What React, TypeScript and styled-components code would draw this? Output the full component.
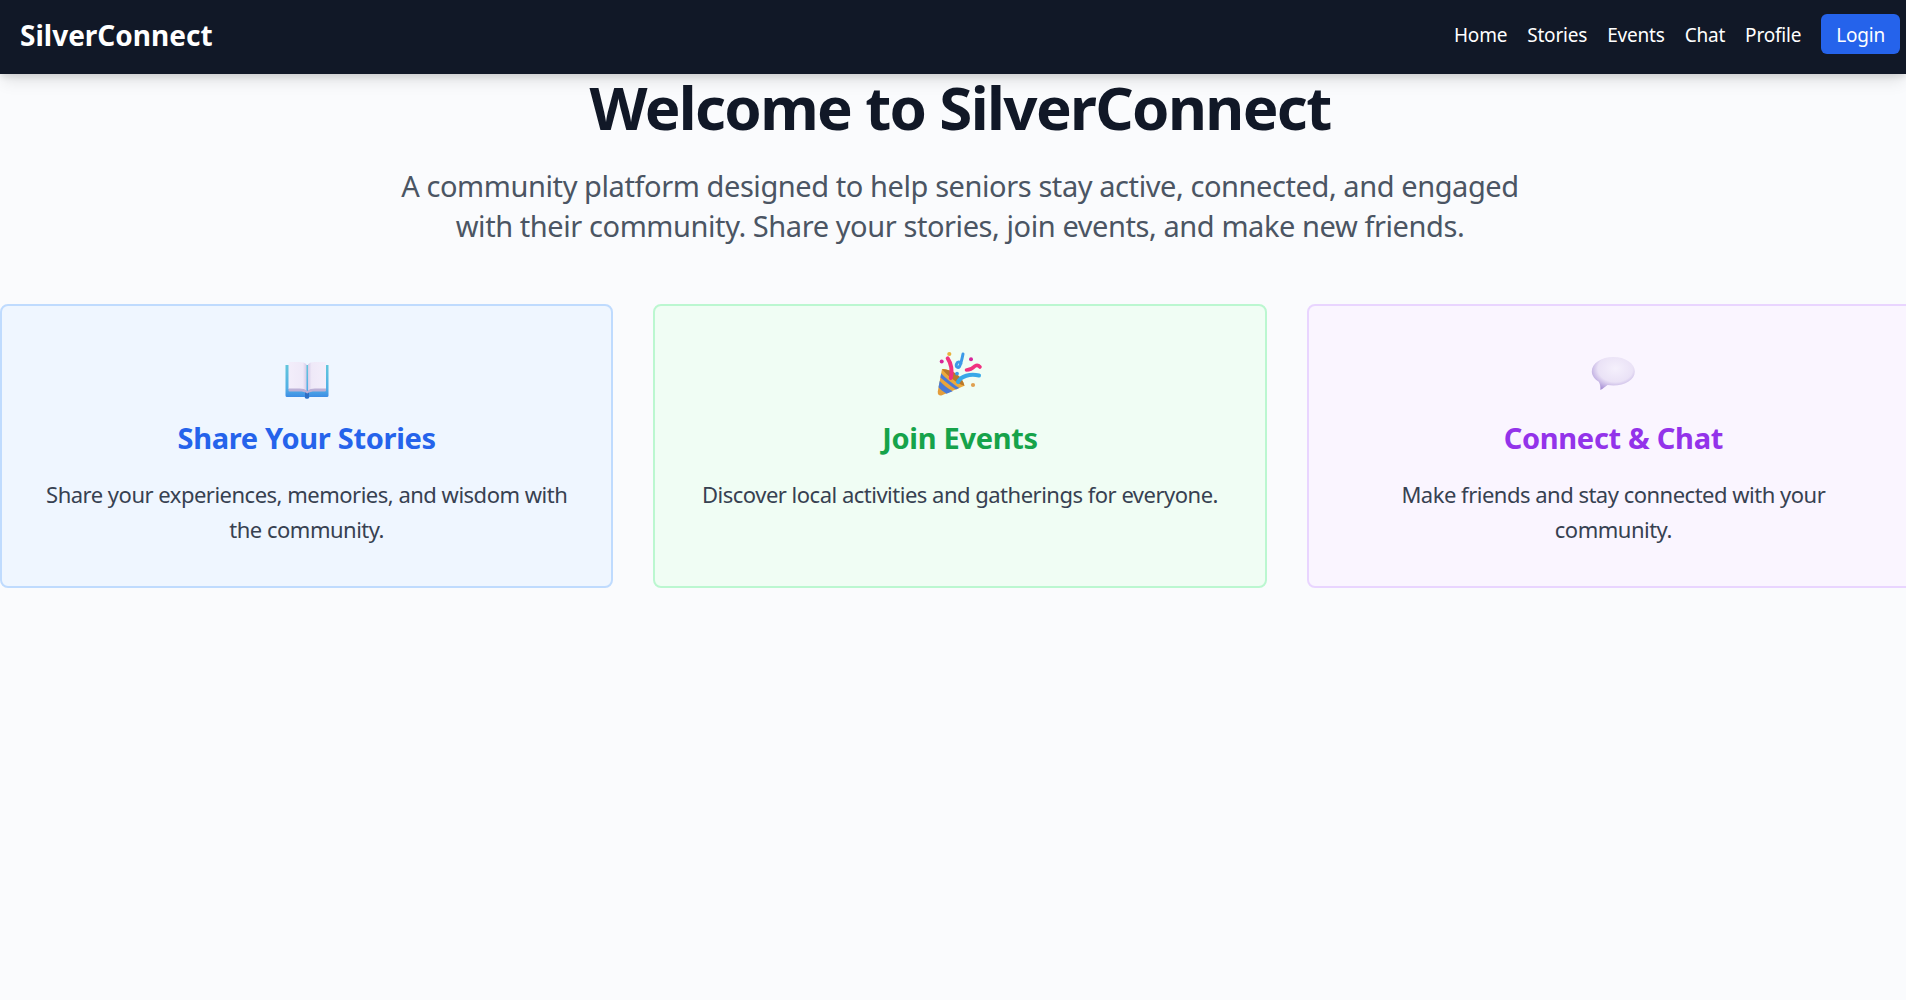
import React from 'react';
import styled, { createGlobalStyle } from 'styled-components';

const GlobalStyle = createGlobalStyle`
  html, body {
    margin: 0;
    padding: 0;
    height: 100%;
    overflow: hidden;
    background-color: #f9fafb;
  }
  body {
    font-family: "Noto Sans", "Open Sans", sans-serif;
  }
`;

const Page = styled.div`
  width: 1906px;
  height: 1000px;
  overflow: hidden;
  background-color: #fafbfd;
`;

const Header = styled.header`
  position: relative;
  z-index: 2;
  height: 74px;
  box-sizing: border-box;
  padding: 0 6px 6px 20px;
  display: flex;
  align-items: center;
  justify-content: space-between;
  background-color: #111827;
  box-shadow: 0 4px 6px -1px rgba(0, 0, 0, 0.1), 0 10px 15px -3px rgba(0, 0, 0, 0.1);
`;

const Logo = styled.div`
  padding-top: 2px;
  color: #ffffff;
  font-size: 28px;
  font-weight: 700;
`;

const Nav = styled.nav`
  display: flex;
  align-items: center;
  gap: 20px;
`;

const NavLink = styled.a`
  padding-top: 2px;
  color: #ffffff;
  font-size: 19px;
  letter-spacing: -0.2px;
`;

const LoginButton = styled.button`
  height: 40px;
  padding: 2px 15px 0;
  border: none;
  border-radius: 6px;
  background-color: #2563eb;
  color: #ffffff;
  font-family: inherit;
  font-size: 19px;
  letter-spacing: -0.2px;
`;

const Main = styled.main`
  width: 1920px;
  padding-top: 3px;
`;

const Title = styled.h1`
  margin: 0 0 29px;
  text-align: center;
  font-size: 60px;
  line-height: 60px;
  font-weight: 700;
  color: #111827;
  letter-spacing: -1.65px;
`;

const Subtitle = styled.p`
  margin: 0 auto 58px;
  width: 1152px;
  text-align: center;
  font-size: 29px;
  line-height: 40px;
  color: #4b5563;
  letter-spacing: -0.42px;
`;

const Cards = styled.section`
  display: grid;
  grid-template-columns: repeat(3, 1fr);
  gap: 40px;
`;

const tones = {
  blue: { bg: '#eff6ff', border: '#bfdbfe', text: '#2563eb' },
  green: { bg: '#f0fdf4', border: '#bbf7d0', text: '#16a34a' },
  purple: { bg: '#faf5ff', border: '#e9d5ff', text: '#9333ea' },
};

type Tone = keyof typeof tones;

const Card = styled.article<{ $tone: Tone }>`
  height: 284px;
  box-sizing: border-box;
  padding: 45px 40px 0;
  display: flex;
  flex-direction: column;
  align-items: center;
  text-align: center;
  border: 2px solid ${(p) => tones[p.$tone].border};
  border-radius: 8px;
  background-color: ${(p) => tones[p.$tone].bg};
`;

const IconSvg = styled.svg`
  display: block;
  width: 48px;
  height: 48px;
`;

const CardTitle = styled.h2<{ $tone: Tone }>`
  margin: 19px 0 19px;
  font-size: 29px;
  line-height: 40px;
  font-weight: 700;
  letter-spacing: -0.3px;
  color: ${(p) => tones[p.$tone].text};
`;

const CardText = styled.p`
  margin: 0;
  font-size: 22px;
  line-height: 35px;
  color: #374151;
  letter-spacing: -0.5px;
`;

function BookIcon() {
  return (
    <IconSvg viewBox="0 0 48 48">
      <defs>
        <linearGradient id="bookPage" x1="0" y1="0" x2="1" y2="0">
          <stop offset="0" stopColor="#f3eefb" />
          <stop offset="0.8" stopColor="#efe9f8" />
          <stop offset="1" stopColor="#d6cce8" />
        </linearGradient>
        <linearGradient id="bookPageR" x1="0" y1="0" x2="1" y2="0">
          <stop offset="0" stopColor="#d6cce8" />
          <stop offset="0.2" stopColor="#efe9f8" />
          <stop offset="1" stopColor="#f3eefb" />
        </linearGradient>
        <linearGradient id="bookCover" x1="0" y1="0" x2="0" y2="1">
          <stop offset="0" stopColor="#62c6dc" />
          <stop offset="0.7" stopColor="#52b0e6" />
          <stop offset="1" stopColor="#3a86e4" />
        </linearGradient>
      </defs>
      <path d="M2.500 14h43v30.500a1.500 1.500 0 0 1-1.500 1.500H26.500l-1 1.500h-3l-1-1.500H4a1.500 1.500 0 0 1-1.500-1.500z" fill="url(#bookCover)" />
      <path d="M22 41h4v5.500l-1 1h-2l-1-1z" fill="#2f6fc4" />
      <path d="M5.500 12.500c0-.9.6-1.500 1.500-1.500h9.500c3 0 6 .8 7 2.500v27c-1.500-1.500-4-2.500-7-2.500H5.500z" fill="url(#bookPage)" />
      <path d="M43 12.500c0-.9-.6-1.500-1.500-1.500H32c-3 0-6 .8-7 2.500v27c1.500-1.500 4-2.500 7-2.500h11z" fill="url(#bookPageR)" />
      <path d="M5.500 37.500h11c3.300 0 6 .8 7.750 2.500 1.750-1.700 4.450-2.500 7.750-2.500h11V39.500a1 1 0 0 1-1 1H32c-3 0-5.600.6-7.750 2-2.150-1.400-4.750-2-7.750-2H6.500a1 1 0 0 1-1-1z" fill="#bcb0d6" />
    </IconSvg>
  );
}

function PartyIcon() {
  return (
    <IconSvg viewBox="0 0 48 48">
      <defs>
        <linearGradient id="coneFill" x1="0" y1="1" x2="1" y2="0">
          <stop offset="0" stopColor="#e29a3a" />
          <stop offset="1" stopColor="#f4b63e" />
        </linearGradient>
      </defs>
      <path d="M6 18 1.800 40.500c-.5 3 1.500 4.600 4.200 3.800l22.500-9.500c-1-4.500-4-8.700-8-11.800C16.500 20 11 18 6 18z" fill="url(#coneFill)" />
      <path d="M6 18c5 .2 10.500 2 14.500 5 4 3.100 7 7.300 8 11.800-4-1-8.300-3.500-12-6.800C12 24.500 8 21 6 18z" fill="#b9782a" />
      <path d="M3.700 30c3.300 3.500 8 7.500 13 10.300l-6.200 2.400c-3.500-2-6.300-4.300-8-6.400zM5.200 22.300c3.700 4.300 10.500 10 18 14.700l-3.200 1.400C14 34.500 8.500 30 4.400 26.500z" fill="#4a7ad6" />
      <path d="M11.700 7.300C15 12 16.800 20 14.800 27" fill="none" stroke="#f0317f" strokeWidth="4" strokeLinecap="round" />
      <path d="M27 3c-1 5-2 10-3.500 12.500-1.500 2-4 .5-3-2.500 1-2.500 3.500-2.500 4.500-.5" fill="none" stroke="#3d9ae8" strokeWidth="3" strokeLinecap="round" />
      <path d="M22 31c3-6 12-8.500 21-6.500" fill="none" stroke="#38a8e8" strokeWidth="4" strokeLinecap="round" />
      <path d="M30.500 19c3.500 0 6.500-2 8.500-4 1.800-1 3.700-.5 5 1" fill="none" stroke="#f0317f" strokeWidth="3.600" strokeLinecap="round" />
      <circle cx="13.300" cy="3" r="2.100" fill="#e8b23c" />
      <circle cx="5.700" cy="10.600" r="2" fill="#d6259a" />
      <circle cx="35" cy="8.300" r="2" fill="#d6259a" />
      <circle cx="21" cy="22.600" r="1.900" fill="#3d9ae8" />
      <circle cx="37" cy="34" r="2.100" fill="#e0a050" />
    </IconSvg>
  );
}

function BubbleIcon() {
  return (
    <IconSvg viewBox="0 0 48 48">
      <defs>
        <radialGradient id="bubbleFill" cx="0.55" cy="0.35" r="0.68">
          <stop offset="0" stopColor="#f5f0fc" />
          <stop offset="0.6" stopColor="#eae2f6" />
          <stop offset="1" stopColor="#a992d6" />
        </radialGradient>
      </defs>
      <path d="M24.300 6c12 0 21.500 6.300 21.500 14.500S36.300 34.500 24.300 34.500c-2 0-4-.2-5.800-.5-2 1.500-4.500 3.800-7.200 5 .3-2.500 0-5.800-1.500-8.300C5.700 28.200 2.800 24.600 2.800 20.500 2.800 12.300 12.300 6 24.300 6z" fill="url(#bubbleFill)" />
    </IconSvg>
  );
}

const features: { tone: Tone; icon: React.ReactNode; title: string; text: string }[] = [
  {
    tone: 'blue',
    icon: <BookIcon />,
    title: 'Share Your Stories',
    text: 'Share your experiences, memories, and wisdom with the community.',
  },
  {
    tone: 'green',
    icon: <PartyIcon />,
    title: 'Join Events',
    text: 'Discover local activities and gatherings for everyone.',
  },
  {
    tone: 'purple',
    icon: <BubbleIcon />,
    title: 'Connect & Chat',
    text: 'Make friends and stay connected with your community.',
  },
];

const links = ['Home', 'Stories', 'Events', 'Chat', 'Profile'];

export default function App() {
  return (
    <Page>
      <GlobalStyle />
      <Header>
        <Logo>SilverConnect</Logo>
        <Nav>
          {links.map((link) => (
            <NavLink key={link}>{link}</NavLink>
          ))}
          <LoginButton>Login</LoginButton>
        </Nav>
      </Header>
      <Main>
        <Title>Welcome to SilverConnect</Title>
        <Subtitle>
          A community platform designed to help seniors stay active, connected, and engaged
          <br />
          with their community. Share your stories, join events, and make new friends.
        </Subtitle>
        <Cards>
          {features.map((f) => (
            <Card key={f.title} $tone={f.tone}>
              {f.icon}
              <CardTitle $tone={f.tone}>{f.title}</CardTitle>
              <CardText>{f.text}</CardText>
            </Card>
          ))}
        </Cards>
      </Main>
    </Page>
  );
}
